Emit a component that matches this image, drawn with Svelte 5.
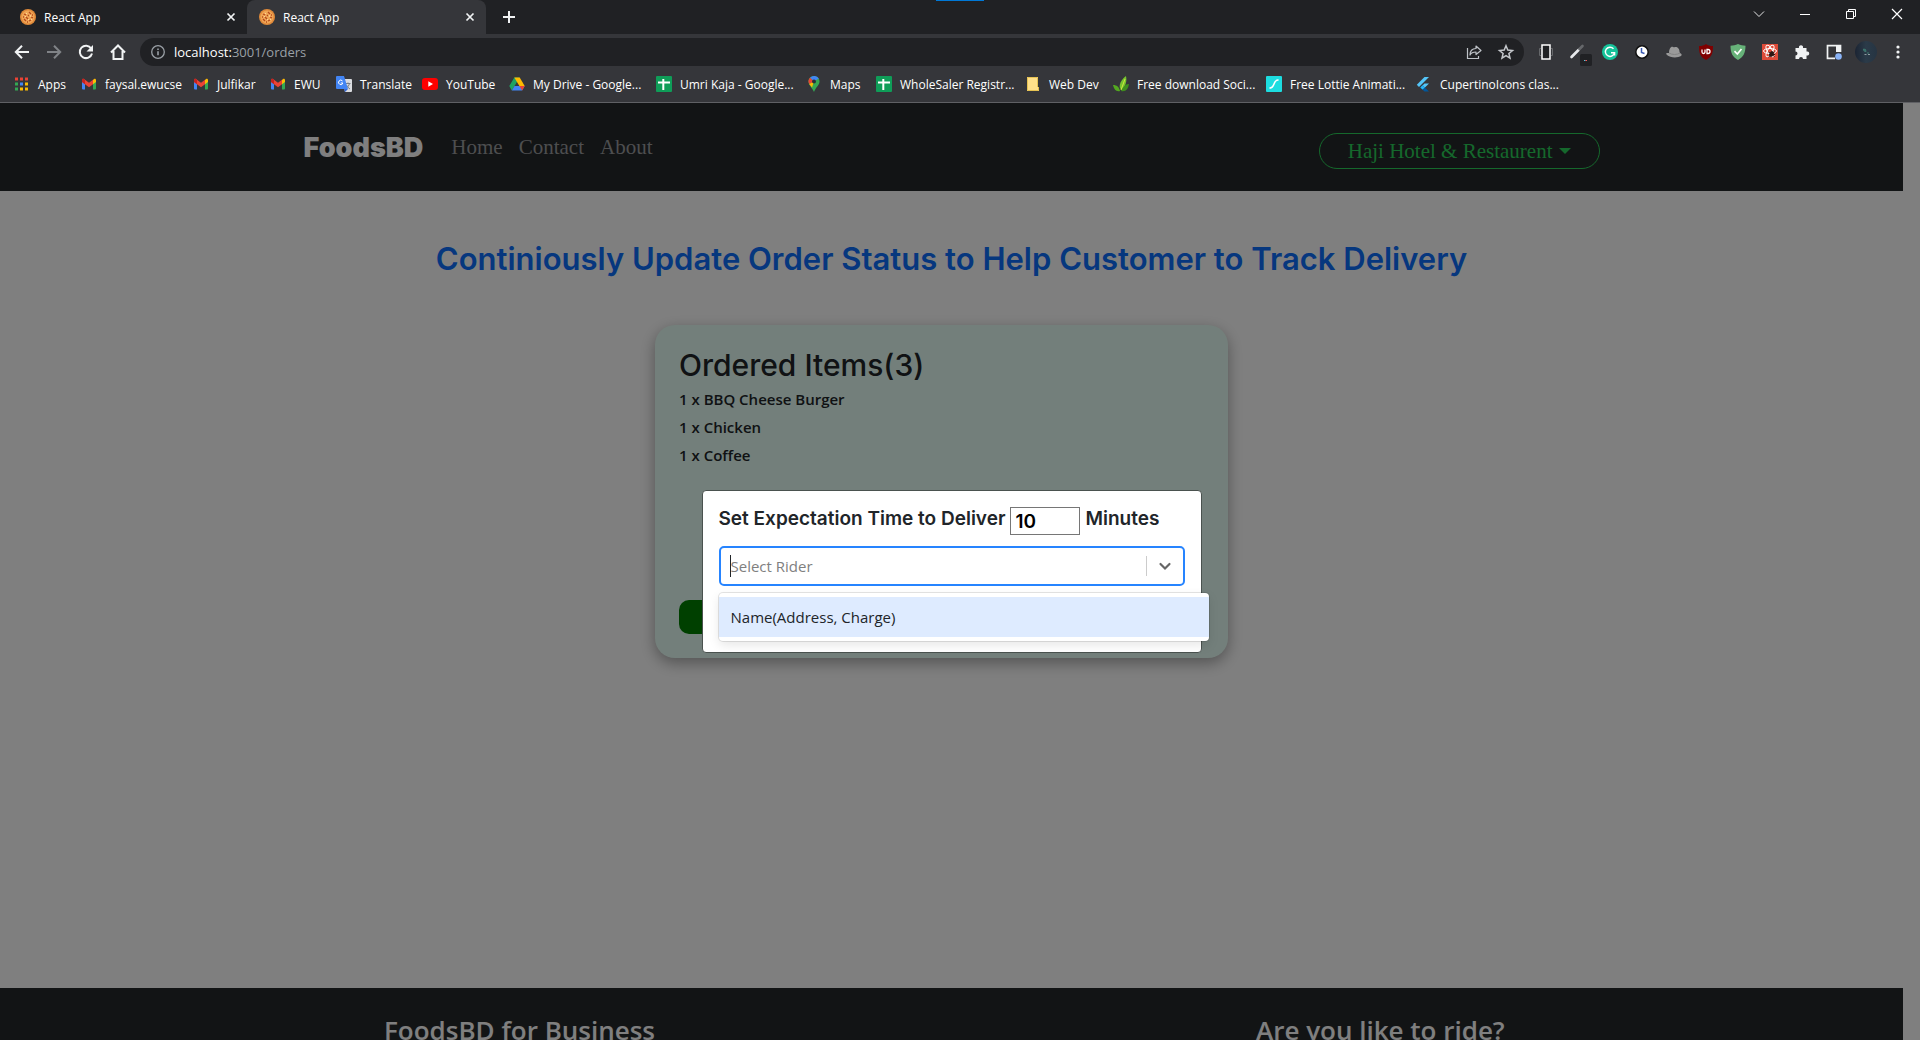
<script>
  const bookmarks = [
    { icon: 'apps', label: 'Apps' },
    { icon: 'gmail', label: 'faysal.ewucse' },
    { icon: 'gmail', label: 'Julfikar' },
    { icon: 'gmail', label: 'EWU' },
    { icon: 'translate', label: 'Translate' },
    { icon: 'youtube', label: 'YouTube' },
    { icon: 'drive', label: 'My Drive - Google...' },
    { icon: 'sheets', label: 'Umri Kaja - Google...' },
    { icon: 'maps', label: 'Maps' },
    { icon: 'sheets', label: 'WholeSaler Registr...' },
    { icon: 'folder', label: 'Web Dev' },
    { icon: 'leaf', label: 'Free download Soci...' },
    { icon: 'lottie', label: 'Free Lottie Animati...' },
    { icon: 'flutter', label: 'CupertinoIcons clas...' }
  ];
  const extensions = ['device', 'wand', 'grammarly', 'clock', 'hat', 'ublock', 'adguard', 'react', 'puzzle', 'panel', 'avatar', 'more'];
  const tabs = [
    { title: 'React App', active: false },
    { title: 'React App', active: true }
  ];
  const items = [
    { count: 1, name: 'BBQ Cheese Burger' },
    { count: 1, name: 'Chicken' },
    { count: 1, name: 'Coffee' }
  ];
  let minutes = $state('10');
  let rider = $state('');
</script>

{#snippet icon(name)}
  {#if name === 'avatar'}
    <svg class="avatar" viewBox="0 0 22 22" aria-hidden="true">
      <defs><linearGradient id="av" x1="0" x2="1"><stop offset="0" stop-color="#1b2433" /><stop offset=".5" stop-color="#2b3b49" /><stop offset="1" stop-color="#263442" /></linearGradient></defs>
      <circle cx="11" cy="11" r="11" fill="url(#av)" />
      <path d="M8.500 8l2 .5.500 2-2-.5zM12 12h2" stroke="#3f7a70" fill="#35606a" />
      <path d="M9.500 13.500h2M13 13.500h2" stroke="#8d9ba0" />
    </svg>
  {:else}
    <svg class="ico" viewBox="0 0 16 16" aria-hidden="true">
      {#if name === 'pizza'}
        <circle cx="8" cy="8" r="8" fill="#e08a3a" />
        <circle cx="8" cy="8" r="6.4" fill="#f0a656" />
        <path d="M4 5l2 1M9 3l2 2M6 8l2 2M11 8l2 1M4 10l2 2M9 12l2-1M8 6l1 1M3 8h1M12 6h1M7 13h1" stroke="#b4481c" stroke-width="1.3" />
        <path d="M6 4l1 1M10 6l1 2M5 8l1-1M8 11l1-1M11 11l1-1" stroke="#ffd596" />
      {:else if name === 'apps'}
        <path d="M1 3h3M6 3h3M11 3h3" stroke="#ea4335" stroke-width="3" />
        <path d="M1 8h3" stroke="#34a853" stroke-width="3" /><path d="M6 8h3" stroke="#4285f4" stroke-width="3" /><path d="M11 8h3" stroke="#fbbc04" stroke-width="3" />
        <path d="M1 13h3" stroke="#34a853" stroke-width="3" /><path d="M6 13h3M11 13h3" stroke="#fbbc04" stroke-width="3" />
      {:else if name === 'gmail'}
        <path d="M1 4h3v9.500H2a1 1 0 0 1-1-1z" fill="#4285f4" />
        <path d="M12 4h3v8.500a1 1 0 0 1-1 1h-2z" fill="#34a853" />
        <path d="M12 4l1-1c1-.8 2 0 2 1v2l-3 2.300z" fill="#fbbc04" />
        <path d="M1 6V4c0-1 1-1.800 2-1l5 3.800L13 3l-1 1v4.200L8 11.200 4 8.200z" fill="#ea4335" />
        <path d="M1 6V4c0-1 1-1.800 2-1l1 1v4.300z" fill="#c5221f" />
      {:else if name === 'translate'}
        <path d="M6 3h9a1 1 0 0 1 1 1v11a1 1 0 0 1-1 1H9z" fill="#dadce0" />
        <path d="M9.500 7.500h5M12 6.500v1M13.500 7.500c-.5 2-2 4-3.500 5M10.500 9c1 2 2 3 3.500 4" stroke="#777e87" fill="none" />
        <path d="M1 0h7l4 13H1a1 1 0 0 1-1-1V1a1 1 0 0 1 1-1z" fill="#4285f4" />
        <path d="M6.500 5a2.200 2.200 0 1 0 .4 2H4.800" stroke="#fff" fill="none" />
        <path d="M8 13h4l-3 3z" fill="#3367d6" />
      {:else if name === 'youtube'}
        <rect y="2" width="16" height="12" rx="3" fill="#f00" /><path d="M6.300 5.300L11 8l-4.700 2.700z" fill="#fff" />
      {:else if name === 'drive'}
        <path d="M5.300 1.500h5.400L5.500 10 2.800 14.500.3 10z" fill="#1ea362" />
        <path d="M5.300 1.500h5.400L15.700 10h-5.300z" fill="#ffba00" />
        <path d="M5.500 10h10.200l-2.600 4.500H2.800z" fill="#4285f4" /><path d="M10.400 10h5.300l-2.600 4.500z" fill="#ea4335" />
      {:else if name === 'sheets'}
        <rect width="16" height="16" rx="1" fill="#0f9d58" /><path d="M2 6.500h12M7.300 3v11" stroke="#fff" stroke-width="2" />
      {:else if name === 'maps'}
        <path d="M8 0c3 0 5.500 2.300 5.500 5.400 0 3.600-3.500 5.200-5.500 10.600C7.300 13 2.500 9.500 2.500 5.400 2.500 2.300 5 0 8 0z" fill="#34a853" />
        <path d="M4 1.700L8 5.400l4.800-2.800A5.500 5.500 0 0 0 4 1.700z" fill="#4285f4" />
        <path d="M4 1.700A5.300 5.300 0 0 0 3.200 8L8 5.400z" fill="#ea4335" />
        <path d="M3.200 8l4.800-2.600L6 11.500z" fill="#fbbc04" /><circle cx="8" cy="5.400" r="2" fill="#2b3038" />
      {:else if name === 'folder'}
        <path d="M2 1h11v10h1v4H2z" fill="#ffe08a" /><path d="M2.500 1.500h10v9.500M13.500 11v3.500h-11v-13" stroke="#e5c252" fill="none" />
      {:else if name === 'leaf'}
        <path d="M13 0c1 5 0 9-4 14-4-1-3-9 4-14z" fill="#76c32e" />
        <path d="M0 9c4 0 6 2 7 6-4 1-6-2-7-6z" fill="#53a820" /><path d="M16 8c-4 0-6 3-8 7 5 1 7-2 8-7z" fill="#3f8f1d" />
        <path d="M12 3L8 14" stroke="#d0e93f" />
      {:else if name === 'lottie'}
        <rect width="16" height="16" rx="1" fill="#1ddde0" /><path d="M4 12c5 0 3-8 8-8" stroke="#fff" stroke-width="1.600" fill="none" stroke-linecap="round" />
      {:else if name === 'flutter'}
        <path d="M8.500 1H13L3 11 .8 8.700z" fill="#54c5f8" /><path d="M8.500 7.500H13l-4.300 4.200-2.200-2.200z" fill="#54c5f8" /><path d="M4.300 11.500l2.200-2.200 2.300 2.300L13 15.500H8.500z" fill="#01579b" /><path d="M4.300 11.500l2.200-2.200 2.300 2.300-2.300 2z" fill="#29b6f6" />
      {:else if name === 'device'}
        <path d="M3 4.500H1.500v7H3M13 4.500h1.500v7H13" stroke="#66686b" fill="none" /><rect x="4" y="1" width="8" height="14" fill="#202124" stroke="#fff" stroke-width="1.500" />
      {:else if name === 'wand'}
        <path d="M1.500 13l7-7" stroke="#e8eaed" stroke-width="2.600" stroke-linecap="round" /><path d="M9.500 5l3-3" stroke="#66686b" stroke-width="2.600" stroke-linecap="round" />
        <rect x="10" y="10" width="12" height="12" rx="1.500" fill="#202124" /><path d="M14 16.500h1.500" stroke="#4cc2d8" /><path d="M15.500 16.500h1.500" stroke="#f25555" />
      {:else if name === 'grammarly'}
        <circle cx="8" cy="8" r="8" fill="#15c39a" /><path d="M11.500 4.800a4.600 4.600 0 1 0 1 4H9M12.600 8.200v3.300" stroke="#fff" stroke-width="1.400" fill="none" />
      {:else if name === 'clock'}
        <circle cx="8" cy="8" r="6.200" fill="#fff" stroke="#111" stroke-width="1.500" /><path d="M7.500 4v4.500l3 1" stroke="#3b5bb5" stroke-width="1.500" fill="none" />
      {:else if name === 'hat'}
        <path d="M3 9c0-4 2-7 4-6s3-1 5 1 1 3 2 5c2 1 2 2 1 3-3 2-11 2-14-1-2-2 0-2 2-2z" fill="#9a9a9a" /><path d="M3 9c3 2 8 2 11 0" stroke="#828282" fill="none" />
      {:else if name === 'ublock'}
        <path d="M8 0c2 1.500 4 2 7 2 0 7-1 11-7 14C2 13 1 9 1 2c3 0 5-.5 7-2z" fill="#800000" /><path d="M4 5.500v2.500a1.500 1.500 0 0 0 3 0V5.500M9 5.500v4h1a2 2 0 0 0 0-4z" stroke="#fff" stroke-width="1.300" fill="none" />
      {:else if name === 'adguard'}
        <path d="M8 0c2.500 1.200 5 1.700 7.500 1.700 0 7-2 11.300-7.500 14.300C2.500 13 .5 8.700.5 1.700 3 1.700 5.500 1.200 8 0z" fill="#67b279" /><path d="M4.500 7.200L7.300 10l4.200-5" stroke="#fff" stroke-width="1.700" fill="none" />
      {:else if name === 'react'}
        <rect width="16" height="16" fill="#dd4b39" /><g fill="none" stroke="#fff"><ellipse cx="8" cy="7" rx="6.500" ry="2.500" /><ellipse cx="8" cy="7" rx="6.500" ry="2.500" transform="rotate(60 8 7)" /><ellipse cx="8" cy="7" rx="6.500" ry="2.500" transform="rotate(-60 8 7)" /></g>
        <ellipse cx="9.500" cy="10" rx="2" ry="3" fill="#2b1512" transform="rotate(30 9.500 10)" /><path d="M6.500 8l6 4.500M6.500 13l6-5M7 10.500h6" stroke="#2b1512" />
      {:else if name === 'puzzle'}
        <path d="M1.500 4H5a2.100 2.100 0 1 1 4 0h3.500v3.500a2.100 2.100 0 1 1 0 4V15H9a2 2 0 1 0-4 0H1.500v-3.500a2 2 0 1 0 0-4z" fill="#f1f3f4" />
      {:else if name === 'panel'}
        <path d="M14.500 8V1.700h-13v12.600H9" stroke="#f1f3f4" stroke-width="1.700" fill="none" /><path d="M10 1h5v7h-5z" fill="#f1f3f4" /><circle cx="12.500" cy="12.500" r="3.300" fill="#8ab4f8" />
      {:else if name === 'more'}
        <circle cx="8" cy="3" r="1.600" fill="#f1f3f4" /><circle cx="8" cy="8" r="1.600" fill="#f1f3f4" /><circle cx="8" cy="13" r="1.600" fill="#f1f3f4" />
      {:else if name === 'share'}
        <path d="M1.500 4v10.500h11V12" stroke="#bdc1c6" stroke-width="1.200" fill="none" /><path d="M10 2l5 4.500-5 4V8C7 8 5 9 4 11c0-4 2-6.500 6-6.500z" stroke="#bdc1c6" stroke-width="1.200" fill="none" stroke-linejoin="round" />
      {:else if name === 'star'}
        <path d="M8 1.800l1.800 4.300 4.700.4-3.600 3 1.100 4.600-4-2.500-4 2.500 1.100-4.600-3.600-3 4.700-.4z" stroke="#c4c7cb" stroke-width="1.500" fill="none" />
      {:else if name === 'info'}
        <circle cx="8" cy="8" r="6.300" stroke="#9aa0a6" stroke-width="1.300" fill="none" /><path d="M8 7.200v4M8 4.500v1.500" stroke="#9aa0a6" stroke-width="1.600" />
      {:else if name === 'back'}
        <path d="M15 8H2M8 1.800L1.800 8 8 14.200" stroke="#f1f3f4" stroke-width="2" fill="none" />
      {:else if name === 'forward'}
        <path d="M1 8h13M8 1.800L14.200 8 8 14.200" stroke="#808387" stroke-width="2" fill="none" />
      {:else if name === 'reload'}
        <path d="M13.200 4.500A6.200 6.200 0 1 0 14 9.500" stroke="#f1f3f4" stroke-width="2" fill="none" /><path d="M15 1v6.500H8.500z" fill="#f1f3f4" />
      {:else if name === 'home'}
        <path d="M1 8.500L8 1.500l7 7M3.500 7v8h9V7" stroke="#f1f3f4" stroke-width="2" fill="none" />
      {:else if name === 'close'}
        <path d="M4.500 4.500l7 7M11.500 4.500l-7 7" stroke="#f1f3f4" stroke-width="1.700" />
      {:else if name === 'plus'}
        <path d="M8 2v12M2 8h12" stroke="#f1f3f4" stroke-width="2" />
      {:else if name === 'chevron'}
        <path d="M3 5.500l5 5 5-5" stroke="#e4e5e6" fill="none" />
      {:else if name === 'minimize'}
        <path d="M3 8.500h10" stroke="#fff" />
      {:else if name === 'restore'}
        <path d="M3.500 5.500h7v7h-7zM5.500 5.500v-2h7v7h-2" stroke="#fff" fill="none" />
      {:else if name === 'exit'}
        <path d="M3 3l10 10M13 3L3 13" stroke="#fff" stroke-width="1.200" />
      {/if}
    </svg>
  {/if}
{/snippet}

<div class="window">
  <header class="browser">
    <div class="tabstrip">
      {#each tabs as tab}
        <div class="tab" class:active={tab.active}>
          {@render icon('pizza')}
          <span class="tab-title">{tab.title}</span>
          <button class="plain" aria-label="Close tab">{@render icon('close')}</button>
        </div>
      {/each}
      <button class="plain new-tab" aria-label="New tab">{@render icon('plus')}</button>
      <span class="indicator"></span>
      <div class="controls">
        {#each ['chevron', 'minimize', 'restore', 'exit'] as c}
          <button class="plain" aria-label={c}>{@render icon(c)}</button>
        {/each}
      </div>
    </div>
    <div class="toolbar">
      {#each ['back', 'forward', 'reload', 'home'] as b}
        <button class="plain tool" aria-label={b}>{@render icon(b)}</button>
      {/each}
      <div class="address">
        {@render icon('info')}
        <span class="url">localhost:<span class="dim">3001/orders</span></span>
        <button class="plain tool" aria-label="Share">{@render icon('share')}</button>
        <button class="plain tool" aria-label="Bookmark this page">{@render icon('star')}</button>
      </div>
      {#each extensions as e}
        <button class="plain tool" aria-label={e}>{@render icon(e)}</button>
      {/each}
    </div>
    <nav class="bookmarks" aria-label="Bookmarks">
      {#each bookmarks as b}
        <a href="#top">{@render icon(b.icon)}<span>{b.label}</span></a>
      {/each}
    </nav>
  </header>

  <div class="viewport">
    <div class="page">
      <div class="navbar">
        <div class="container">
          <a class="brand" href="#home">FoodsBD</a>
          <nav class="links">
            <a href="#home">Home</a>
            <a href="#contact">Contact</a>
            <a href="#about">About</a>
          </nav>
          <button class="account">Haji Hotel &amp; Restaurent<span class="caret"></span></button>
        </div>
      </div>
      <main>
        <h1>Continiously Update Order Status to Help Customer to Track Delivery</h1>
        <div class="orders">
          <section class="card">
            <h2>Ordered Items(3)</h2>
            <ul>
              {#each items as item}
                <li>{item.count} x {item.name}</li>
              {/each}
            </ul>
            <button class="accept" aria-label="Accept order"></button>
          </section>
        </div>
      </main>
      <footer>
        <h3>FoodsBD for Business</h3>
        <h3>Are you like to ride?</h3>
      </footer>
    </div>
    <div class="overlay">
      <div class="modal" role="dialog" aria-label="Set delivery time">
        <label class="time">
          <span>Set Expectation Time to Deliver</span>
          <input type="text" bind:value={minutes} />
          <span>Minutes</span>
        </label>
        <div class="select">
          <div class="control">
            <span class="cursor"></span>
            <input type="text" role="combobox" aria-label="Select Rider" aria-expanded="true" aria-controls="riders" placeholder="Select Rider" bind:value={rider} />
            <span class="divider"></span>
            <button class="plain arrow" aria-label="Toggle riders">
              <svg viewBox="0 0 20 20" width="20" height="20" aria-hidden="true"><path d="M5.500 8l4.500 4.500L14.500 8" stroke="#666" stroke-width="2.200" fill="none" stroke-linecap="round" /></svg>
            </button>
          </div>
          <ul class="menu" id="riders" role="listbox">
            <li role="option" aria-selected="false">Name(Address, Charge)</li>
          </ul>
        </div>
      </div>
    </div>
  </div>
</div>

<style>
  :global(body) { margin: 0; }
  .window, .window * { box-sizing: border-box; }
  .window {
    display: flex;
    flex-direction: column;
    height: 100vh;
    overflow: hidden;
    font-family: "Open Sans", "Noto Sans", sans-serif;
  }
  a { color: inherit; text-decoration: none; }
  h1, h2, h3, ul { margin: 0; padding: 0; }
  ul { list-style: none; }
  .plain {
    display: grid;
    place-items: center;
    padding: 0;
    border: 0;
    background: none;
  }
  .ico { display: block; flex: none; width: 16px; height: 16px; overflow: visible; }
  .avatar { display: block; width: 22px; height: 22px; }

  .browser {
    flex: none;
    background: #35363a;
    border-bottom: 1px solid #5f6064;
    color: #fff;
    font-size: 12px;
  }
  .tabstrip {
    position: relative;
    display: flex;
    height: 34px;
    padding-left: 8px;
    background: #202124;
  }
  .tab {
    display: flex;
    align-items: center;
    gap: 8px;
    width: 239px;
    padding: 0 8px 0 12px;
  }
  .tab.active { border-radius: 8px 8px 0 0; background: #35363a; }
  .tab-title { flex: 1; }
  .new-tab { margin-left: 15px; }
  .indicator {
    position: absolute;
    top: 0;
    left: calc(50% - 24px);
    width: 48px;
    height: 1px;
    background: #0078d7;
  }
  .controls { display: flex; height: 28px; margin-left: auto; }
  .controls button { width: 46px; }
  .toolbar {
    display: flex;
    align-items: center;
    height: 36px;
    padding: 0 6px;
  }
  .tool { flex: none; width: 32px; height: 28px; }
  .address {
    display: flex;
    flex: 1;
    align-items: center;
    height: 28px;
    margin: 0 6px;
    padding: 0 2px 0 10px;
    border-radius: 14px;
    background: #202124;
  }
  .url { flex: 1; padding-left: 8px; font-size: 13px; }
  .dim { color: #9aa0a6; }
  .bookmarks {
    display: grid;
    grid-template-columns: 67px 112px 77px 66px 86px 87px 147px 150px 70px 149px 88px 153px 150px 1fr;
    align-items: center;
    height: 32px;
    padding: 0 0 4px 14px;
  }
  .bookmarks a { display: flex; align-items: center; gap: 8px; white-space: nowrap; }

  .viewport {
    position: relative;
    flex: 1;
    overflow: hidden;
    padding-right: 17px;
    background: #fff;
  }
  .navbar { background: #25282b; }
  .container {
    display: flex;
    align-items: center;
    max-width: 1320px;
    height: 88px;
    margin: 0 auto;
    padding: 0 12px;
    font-family: "Liberation Serif", serif;
    font-size: 21px;
  }
  .brand { color: #fff; font: 900 27px Inter, sans-serif; }
  .links { display: flex; gap: 16px; margin-left: 28px; color: #9b9d9f; }
  .account {
    display: flex;
    align-items: center;
    gap: 6px;
    height: 36px;
    margin: 8px 0 0 auto;
    padding: 0 28px;
    border: 1px solid #2ad058;
    border-radius: 18px;
    background: none;
    color: #2ad058;
    font: inherit;
  }
  .caret { border: 6px solid transparent; border-top-color: currentColor; border-bottom: 0; }
  main { min-height: calc(100vh - 243px); padding-top: 48px; }
  h1 {
    color: #0d6efd;
    font: 600 31px/40px Inter, sans-serif;
    text-align: center;
  }
  .orders {
    display: flex;
    justify-content: center;
    padding: 46px 20px 0 0;
  }
  .card {
    width: 573px;
    padding: 20px 24px 24px;
    border-radius: 20px;
    background: #e7fff6;
    box-shadow: 0 5px 15px rgba(0, 0, 0, 0.35);
    color: #212529;
  }
  h2 { font: 500 30px/40px Inter, sans-serif; }
  .card li { font-size: 15px; font-weight: 600; line-height: 28px; }
  .accept {
    display: block;
    width: 240px;
    height: 34px;
    margin-top: 131px;
    border: 0;
    border-radius: 10px;
    background: #008000;
  }
  footer {
    display: grid;
    grid-template-columns: 872px 1fr;
    padding: 24px 24px 24px 384px;
    background: #25282b;
    color: #fff;
  }
  h3 { font-size: 26px; font-weight: 600; line-height: 36px; }

  .overlay {
    position: absolute;
    inset: 0;
    display: grid;
    place-items: center;
    padding-right: 17px;
    background: rgba(0, 0, 0, 0.5);
  }
  .modal {
    width: 500px;
    padding: 16px 16px 66px;
    border: 1px solid #4a524f;
    border-radius: 4px;
    background: #fff;
    color: #212529;
  }
  .time {
    display: flex;
    align-items: flex-start;
    gap: 5px;
    font: 600 19px/24px Inter, sans-serif;
  }
  .time input {
    width: 70px;
    height: 28px;
    padding: 1px 4px;
    border: 1px solid #767676;
    color: #000;
    font: inherit;
  }
  .select { position: relative; margin-top: 11px; }
  .control {
    display: flex;
    align-items: center;
    height: 40px;
    padding-left: 9px;
    border: 2px solid #2684ff;
    border-radius: 5px;
  }
  .cursor { width: 1px; height: 22px; background: #212529; }
  .control input {
    flex: 1;
    padding: 0;
    border: 0;
    outline: 0;
    background: none;
    color: #212529;
    font: 15px "Open Sans", sans-serif;
  }
  .control input::placeholder { color: #808080; }
  .divider { width: 1px; height: 20px; background: #ccc; }
  .arrow { width: 36px; height: 36px; }
  .menu {
    position: absolute;
    top: 47px;
    left: 0;
    width: 490px;
    padding: 4px 0;
    border-radius: 4px;
    background: #fff;
    box-shadow: 0 0 0 1px rgba(0, 0, 0, 0.1), 0 4px 11px rgba(0, 0, 0, 0.1);
  }
  .menu li { padding: 8px 12px; background: #deebff; font-size: 15px; line-height: 24px; }
</style>
